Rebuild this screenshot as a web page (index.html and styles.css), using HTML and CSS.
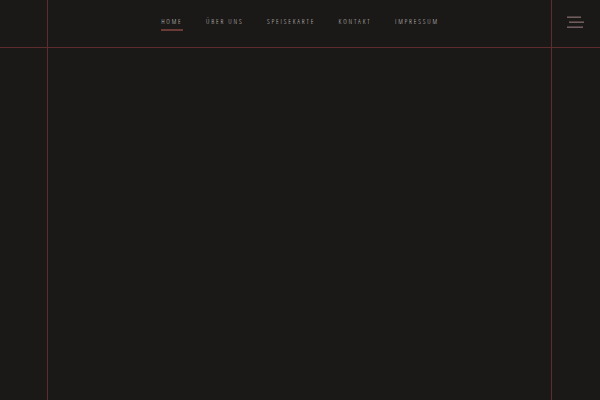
FILE: index.html
```html
<!DOCTYPE html>
<html lang="de">
<head>
<meta charset="utf-8">
<title>Home</title>
<link rel="stylesheet" href="styles.css">
</head>
<body>
<div class="page">
  <header class="header">
    <nav class="nav">
      <a class="nav-link active" href="#">HOME</a>
      <a class="nav-link" href="#">ÜBER UNS</a>
      <a class="nav-link" href="#">SPEISEKARTE</a>
      <a class="nav-link" href="#">KONTAKT</a>
      <a class="nav-link" href="#">IMPRESSUM</a>
    </nav>
    <button class="menu-btn" aria-label="Menü">
      <svg width="17" height="13" viewBox="0 0 17 13">
        <rect x="0" y="0.5" width="14" height="1.4" fill="#7a6464"/>
        <rect x="2" y="5.5" width="15" height="1.4" fill="#7a6464"/>
        <rect x="0" y="10.5" width="16" height="1.4" fill="#7a6464"/>
      </svg>
    </button>
  </header>
  <main class="main"></main>
  <div class="frame"></div>
</div>
</body>
</html>
```

FILE: styles.css
```css
html, body {
  margin: 0;
  padding: 0;
  height: 100%;
}
body {
  background: #1b1918;
  font-family: "Open Sans", "DejaVu Sans", sans-serif;
  font-stretch: 75%;
  font-variation-settings: "wdth" 75;
}
.page {
  position: relative;
  min-height: 100%;
}
.header {
  position: relative;
  height: 47px;
  border-bottom: 1px solid #5e2c2e;
  display: flex;
  justify-content: center;
  align-items: flex-start;
}
.nav {
  display: flex;
  gap: 23.5px;
  padding-top: 17px;
}
.nav-link {
  color: #c9c4c0;
  text-decoration: none;
  font-size: 6.7px;
  font-weight: 300;
  letter-spacing: 1.85px;
  line-height: 9px;
  padding-bottom: 3px;
  border-bottom: 2px solid transparent;
}
.nav-link.active {
  border-bottom-color: #6a3b36;
}
.menu-btn {
  position: absolute;
  right: 16px;
  top: 16px;
  background: none;
  border: 0;
  padding: 0;
  display: flex;
}
.frame {
  position: absolute;
  top: 0;
  bottom: 0;
  left: 47px;
  right: 48px;
  border-left: 1px solid #5e2c2e;
  border-right: 1px solid #5e2c2e;
  pointer-events: none;
}
.main {
  height: 352px;
}
```
